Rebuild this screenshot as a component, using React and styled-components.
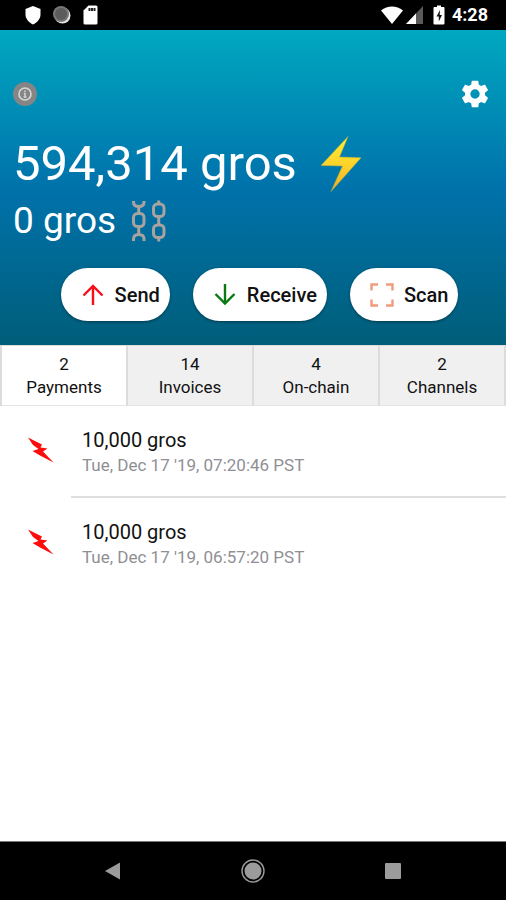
import React from "react";
import styled, { createGlobalStyle } from "styled-components";

const payments = [
  { id: 1, amount: "10,000 gros", date: "Tue, Dec 17 '19, 07:20:46 PST" },
  { id: 2, amount: "10,000 gros", date: "Tue, Dec 17 '19, 06:57:20 PST" },
];

const tabs = [
  { label: "Payments", count: 2 },
  { label: "Invoices", count: 14 },
  { label: "On-chain", count: 4 },
  { label: "Channels", count: 2 },
];

function App() {
  const [active, setActive] = React.useState("Payments");

  return (
    <>
      <GlobalStyle />
      <Screen>
        <StatusBar>
          <StatusGroup $gap={12}>
            <ShieldIcon />
            <SyncIcon />
            <CardIcon />
          </StatusGroup>
          <StatusGroup $gap={3}>
            <WifiIcon />
            <SignalIcon />
            <BatteryIcon />
            <Clock>4:28</Clock>
          </StatusGroup>
        </StatusBar>
        <Header>
          <TopRow>
            <InfoButton aria-label="Info">
              <InfoIcon />
            </InfoButton>
            <IconButton aria-label="Settings">
              <GearIcon />
            </IconButton>
          </TopRow>
          <Balance>
            594,314 gros <BoltIcon />
          </Balance>
          <ChainBalance>
            0 gros <ChainsIcon />
          </ChainBalance>
          <Actions>
            <ActionButton>
              <ActionIcon>
                <ArrowUp />
              </ActionIcon>
              Send
            </ActionButton>
            <ActionButton>
              <ActionIcon>
                <ArrowDown />
              </ActionIcon>
              Receive
            </ActionButton>
            <ActionButton>
              <ActionIcon>
                <ScanIcon />
              </ActionIcon>
              Scan
            </ActionButton>
          </Actions>
        </Header>
        <Tabs>
          {tabs.map(({ label, count }) => (
            <Tab
              key={label}
              $active={label === active}
              aria-pressed={label === active}
              onClick={() => setActive(label)}
            >
              <span>{count}</span>
              <span>{label}</span>
            </Tab>
          ))}
        </Tabs>
        <List>
          {payments.map(({ id, amount, date }) => (
            <Item key={id}>
              <ItemIcon>
                <PaymentIcon />
              </ItemIcon>
              <ItemBody>
                <Amount>{amount}</Amount>
                <DateText>{date}</DateText>
              </ItemBody>
            </Item>
          ))}
        </List>
        <NavBar>
          <NavButton aria-label="Back">
            <svg width="24" height="24" viewBox="0 0 24 24">
              <path d="M4 12 19 3.5v17z" fill="#9b9b9b" />
            </svg>
          </NavButton>
          <NavButton aria-label="Home">
            <svg width="24" height="24" viewBox="0 0 24 24">
              <circle cx="12" cy="12" r="8.5" fill="#9b9b9b" />
              <circle cx="12" cy="12" r="11" fill="none" stroke="#9b9b9b" strokeWidth="1.4" />
            </svg>
          </NavButton>
          <NavButton aria-label="Recent apps">
            <svg width="24" height="24" viewBox="0 0 24 24">
              <rect x="4" y="4" width="16" height="16" rx="1" fill="#9b9b9b" />
            </svg>
          </NavButton>
        </NavBar>
      </Screen>
    </>
  );
}

const ShieldIcon = () => (
  <svg width="16" height="20" viewBox="0 0 16 20">
    <path d="M8 1l7.5 3v5.5c0 4.5-3.5 8-7.5 10-4-2-7.5-5.5-7.5-10V4z" fill="#fff" />
  </svg>
);

const SyncIcon = () => (
  <svg width="18" height="18" viewBox="0 0 18 18">
    <circle cx="9.5" cy="9.5" r="8" fill="#e6e6e6" />
    <circle cx="8" cy="8" r="8" fill="#777" />
    <circle cx="8" cy="8" r="6" fill="#5c5c5c" />
  </svg>
);

const CardIcon = () => (
  <svg width="15" height="20" viewBox="0 0 15 20">
    <path
      d="M5.5.5H13A1.5 1.5 0 0 1 14.5 2v16a1.5 1.5 0 0 1-1.5 1.5H2A1.5 1.5 0 0 1 .5 18V5.5z"
      fill="#fff"
    />
    <path d="M5.5 3h2v3h-2zM8 3h2v3H8zM10.500 3h2v3h-2z" fill="#222" />
  </svg>
);

const WifiIcon = () => (
  <svg width="22" height="18" viewBox="0 0 22 18">
    <path d="M11 18 0 4.5C6.500-.8 15.500-.8 22 4.500z" fill="#fff" />
  </svg>
);

const SignalIcon = () => (
  <svg width="17" height="18" viewBox="0 0 17 18">
    <path d="M17 0v18H0z" fill="#5a5a5a" />
    <path d="M10 7.500V18H0z" fill="#fff" />
  </svg>
);

const BatteryIcon = () => (
  <svg width="23" height="20" viewBox="1 0 23 20">
    <path
      d="M12 .5h4V2h2.500a1 1 0 0 1 1 1v15.500a1 1 0 0 1-1 1h-9a1 1 0 0 1-1-1V3a1 1 0 0 1 1-1H12z"
      fill="#fff"
    />
    <path d="M15 5 11.500 11.500h2.300v5l3.200-6.500h-2.300z" fill="#111" />
  </svg>
);

const InfoIcon = () => (
  <svg width="16" height="16" viewBox="0 0 16 16" fill="none" stroke="#d8d8d8">
    <circle cx="8" cy="8" r="6" strokeWidth="1.6" />
    <path d="M8 4.500v1.500M6.800 7.500H8V11M6.600 11h2.800" strokeWidth="1.400" />
  </svg>
);

const GearIcon = () => (
  <svg width="32" height="32" viewBox="0 0 24 24">
    <path
      d="M19.43 12.98c.04-.32.07-.64.07-.98s-.03-.66-.07-.98l2.11-1.65c.19-.15.24-.42.12-.64l-2-3.46c-.12-.22-.39-.3-.61-.22l-2.49 1c-.52-.4-1.08-.73-1.69-.98l-.38-2.65C14.46 2.18 14.25 2 14 2h-4c-.25 0-.46.18-.49.42l-.38 2.65c-.61.25-1.17.59-1.69.98l-2.49-1c-.23-.09-.49 0-.61.22l-2 3.46c-.13.22-.07.49.12.64l2.11 1.65c-.04.32-.07.65-.07.98s.03.66.07.98l-2.11 1.65c-.19.15-.24.42-.12.64l2 3.46c.12.22.39.3.61.22l2.49-1c.52.4 1.08.73 1.69.98l.38 2.65c.03.24.24.42.49.42h4c.25 0 .46-.18.49-.42l.38-2.65c.61-.25 1.17-.59 1.69-.98l2.49 1c.23.09.49 0 .61-.22l2-3.46c.12-.22.07-.49-.12-.64zM12 15.5a3.5 3.5 0 1 1 0-7 3.5 3.5 0 0 1 0 7z"
      fill="#fff"
    />
  </svg>
);

const BoltIcon = () => (
  <svg width="40" height="56" viewBox="0 0 40 56">
    <defs>
      <linearGradient id="bolt" x1="0" y1="0" x2="0" y2="1">
        <stop offset="0" stopColor="#ffee32" />
        <stop offset="0.5" stopColor="#fdd32b" />
        <stop offset="1" stopColor="#efae22" />
      </linearGradient>
    </defs>
    <path
      d="M27 .5 0 29.5 21.5 30 10 55.5 40 21.7 18.5 21z"
      fill="url(#bolt)"
      stroke="#c9b03a"
      strokeWidth="0.5"
    />
  </svg>
);

const ChainsIcon = () => (
  <svg width="34" height="42" viewBox="0 0 34 42" fill="none" stroke="#a8a39f" strokeWidth="3">
    <rect x="1.5" y="13.5" width="10.5" height="13" rx="4" />
    <path d="M1.500 1v1c0 3 2 4.500 5.250 4.500S12 5 12 2V1M1.500 41v-2c0-3 2-4.500 5.250-4.500S12 36 12 39v2" />
    <rect x="21.5" y="4" width="10.5" height="12.5" rx="4" />
    <rect x="21.5" y="25" width="10.5" height="12.5" rx="4" />
    <path d="M6.750 6v9M6.750 25v10M26.750 .5v4M26.750 15.500v10.500M26.750 36.500v5" />
  </svg>
);

const ArrowUp = () => (
  <svg width="22" height="22" viewBox="0 0 22 22" fill="none" stroke="#f80d1b" strokeWidth="2.4">
    <path d="M11 21V2M1.5 11.5 11 2l9.5 9.5" />
  </svg>
);

const ArrowDown = () => (
  <svg width="22" height="22" viewBox="0 0 22 22" fill="none" stroke="#087a12" strokeWidth="2.4">
    <path d="M11 0v19.500M1.500 10 11 19.500l9.500-9.500" />
  </svg>
);

const ScanIcon = () => (
  <svg width="24" height="24" viewBox="0 0 24 24" fill="none" stroke="#f29a7c" strokeWidth="2.4">
    <path d="M1.500 7.500v-6H8M16 1.500h6.500v6M22.500 16.500v6H16M8 22.500H1.500v-6" />
  </svg>
);

const PaymentIcon = () => (
  <svg width="26" height="26" viewBox="0 0 26 26">
    <path d="M0 .5 14 7.500 12.500 10.500 19.500 11.500 15 14.500 25.500 25.500 12 18.500 4.500 14 10.500 12 5 8z" fill="#fb0d0d" />
  </svg>
);

const GlobalStyle = createGlobalStyle`
  * {
    box-sizing: border-box;
  }

  body {
    margin: 0;
    background: #fff;
    color: #111;
    font-family: Roboto, "Liberation Sans", sans-serif;
  }

  button {
    padding: 0;
    border: 0;
    background: none;
    color: inherit;
    font: inherit;
    cursor: pointer;
  }

  svg {
    display: block;
    flex-shrink: 0;
  }
`;

const Screen = styled.div`
  display: flex;
  flex-direction: column;
  min-height: 100vh;
`;

const StatusBar = styled.div`
  display: flex;
  align-items: center;
  justify-content: space-between;
  height: 30px;
  padding: 0 18px 0 25px;
  background: #000;
`;

const StatusGroup = styled.div`
  display: flex;
  align-items: center;
  gap: ${({ $gap }) => $gap}px;
`;

const Clock = styled.span`
  color: #fff;
  font-size: 18px;
  font-weight: 700;
  line-height: 24px;
`;

const Header = styled.header`
  padding: 48px 0 24px 13px;
  background: linear-gradient(#00a8c0, #0072ab 50%, #005e79);
  color: #fff;
`;

const TopRow = styled.div`
  display: flex;
  align-items: center;
  justify-content: space-between;
  padding-right: 15px;
`;

const IconButton = styled.button`
  display: flex;
  align-items: center;
  justify-content: center;
`;

const InfoButton = styled(IconButton)`
  width: 24px;
  height: 24px;
  border-radius: 50%;
  background: #858585;
`;

const Balance = styled.div`
  display: flex;
  align-items: center;
  gap: 24px;
  margin-top: 24px;
  font-size: 49px;
  line-height: 60px;
`;

const ChainBalance = styled.div`
  display: flex;
  align-items: center;
  gap: 16px;
  margin-top: 4px;
  font-size: 37px;
  line-height: 46px;
`;

const Actions = styled.div`
  display: flex;
  justify-content: center;
  gap: 23px;
  margin-top: 24px;
`;

const ActionButton = styled.button`
  display: flex;
  align-items: center;
  gap: 7px;
  height: 53px;
  padding: 0 10px 0 17px;
  border-radius: 27px;
  background: #fff;
  box-shadow: 0 1px 3px rgba(0, 0, 0, 0.4);
  color: #111;
  font-size: 20px;
  font-weight: 500;
`;

const ActionIcon = styled.span`
  display: flex;
  justify-content: center;
  width: 30px;
`;

const Tabs = styled.nav`
  display: grid;
  grid-template-columns: repeat(4, 1fr);
  border-left: 2px solid #dcdcdc;
`;

const Tab = styled.button`
  display: flex;
  flex-direction: column;
  align-items: center;
  padding: 7px 0 6px;
  border-top: 1px solid #dcdcdc;
  border-right: 2px solid #dcdcdc;
  border-bottom: 1px solid #e4e4e4;
  background: ${({ $active }) => ($active ? "#fff" : "#f0f0f0")};
  font-size: 17px;
  line-height: 23px;
`;

const List = styled.ul`
  flex: 1;
  margin: 0;
  padding: 0;
  list-style: none;
`;

const Item = styled.li`
  display: flex;
`;

const ItemIcon = styled.div`
  display: flex;
  justify-content: center;
  width: 71px;
  padding: 31px 0 0 10px;
`;

const ItemBody = styled.div`
  flex: 1;
  padding: 21px 0 18px 11px;
  border-bottom: 2px solid #dedee0;

  ${Item}:last-child & {
    border-bottom: 0;
  }
`;

const Amount = styled.div`
  font-size: 20px;
  line-height: 26px;
`;

const DateText = styled.div`
  color: #8f8f94;
  font-size: 17px;
  line-height: 25px;
`;

const NavBar = styled.nav`
  display: flex;
  align-items: center;
  justify-content: center;
  gap: 116px;
  height: 59px;
  border-top: 1px solid #777;
  background: #000;
`;

const NavButton = styled.button`
  width: 24px;
  height: 24px;
`;

export default App;
